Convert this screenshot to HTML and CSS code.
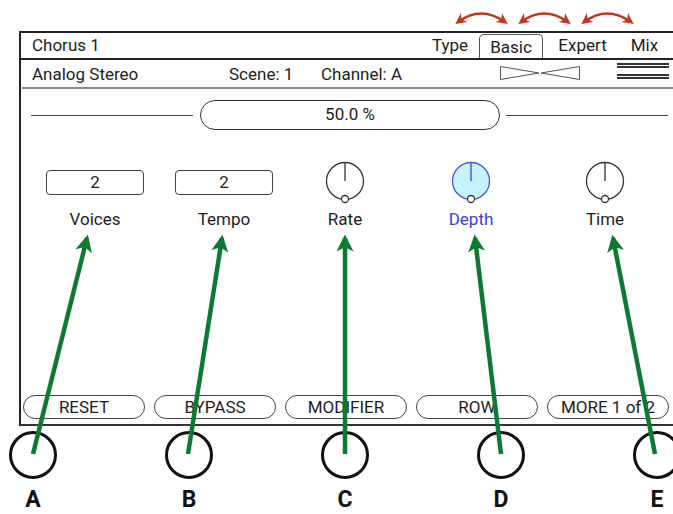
FILE: index.html
```html
<!DOCTYPE html>
<html lang="en">
<head>
    <meta charset="UTF-8">
    <meta name="viewport" content="width=device-width, initial-scale=1.0">
    <title>Chorus 1 - Basic</title>
    <link rel="stylesheet" href="styles.css">
</head>
<body>
    <div class="stage">
        <div class="unit">
            <div class="title-bar">
                <span class="block-name">Chorus 1</span>
                <div class="tabs">
                    <span class="tab type">Type</span>
                    <span class="tab active">Basic</span>
                    <span class="tab expert">Expert</span>
                    <span class="tab mix">Mix</span>
                </div>
            </div>
            <div class="info-bar">
                <span class="model">Analog Stereo</span>
                <span class="scene">Scene: 1</span>
                <span class="channel">Channel: A</span>
                <svg class="bowtie" width="80" height="14" viewBox="0 0 80 14">
                    <polygon points="0.5,0.5 39,7 0.5,13.5" fill="none" stroke="#555" stroke-width="1"/>
                    <polygon points="79.5,0.5 41,7 79.5,13.5" fill="none" stroke="#555" stroke-width="1"/>
                </svg>
                <svg class="menu" width="52" height="17" viewBox="0 0 52 17">
                    <rect x="0" y="0" width="52" height="2" fill="#333"/>
                    <rect x="0" y="3" width="52" height="2" fill="#333"/>
                    <rect x="0" y="11" width="52" height="2" fill="#333"/>
                    <rect x="0" y="14" width="52" height="2" fill="#333"/>
                </svg>
            </div>
            <div class="slider-row">
                <span class="rule left"></span>
                <div class="pill">50.0 %</div>
                <span class="rule right"></span>
            </div>
            <div class="params">
                <div class="param p1">
                    <div class="control"><div class="value-box">2</div></div>
                    <div class="label">Voices</div>
                </div>
                <div class="param p2">
                    <div class="control"><div class="value-box">2</div></div>
                    <div class="label">Tempo</div>
                </div>
                <div class="param p3">
                    <div class="control">
                        <svg class="knob" width="44" height="44" viewBox="0 0 44 44">
                            <circle cx="22" cy="21" r="18.5" fill="#fff" stroke="#333" stroke-width="1.3"/>
                            <line x1="22" y1="2.5" x2="22" y2="21" stroke="#333" stroke-width="1.3"/>
                            <circle cx="22" cy="39" r="3.5" fill="#fff" stroke="#333" stroke-width="1.3"/>
                        </svg>
                    </div>
                    <div class="label">Rate</div>
                </div>
                <div class="param p4 selected">
                    <div class="control">
                        <svg class="knob" width="44" height="44" viewBox="0 0 44 44">
                            <circle cx="22" cy="21" r="18.5" fill="#c6f4fb" stroke="#4653e6" stroke-width="1.3"/>
                            <line x1="22" y1="2.5" x2="22" y2="21" stroke="#3a47c8" stroke-width="1.3"/>
                            <circle cx="22" cy="39" r="3.5" fill="#fff" stroke="#333" stroke-width="1.3"/>
                        </svg>
                    </div>
                    <div class="label">Depth</div>
                </div>
                <div class="param p5">
                    <div class="control">
                        <svg class="knob" width="44" height="44" viewBox="0 0 44 44">
                            <circle cx="22" cy="21" r="18.5" fill="#fff" stroke="#333" stroke-width="1.3"/>
                            <line x1="22" y1="2.5" x2="22" y2="21" stroke="#333" stroke-width="1.3"/>
                            <circle cx="22" cy="39" r="3.5" fill="#fff" stroke="#333" stroke-width="1.3"/>
                        </svg>
                    </div>
                    <div class="label">Time</div>
                </div>
            </div>
            <div class="softkeys">
                <div class="softkey">RESET</div>
                <div class="softkey">BYPASS</div>
                <div class="softkey">MODIFIER</div>
                <div class="softkey">ROW</div>
                <div class="softkey">MORE 1 of 2</div>
            </div>
        </div>

        <div class="footswitches">
            <div class="switch"><div class="ring"></div><div class="letter">A</div></div>
            <div class="switch"><div class="ring"></div><div class="letter">B</div></div>
            <div class="switch"><div class="ring"></div><div class="letter">C</div></div>
            <div class="switch"><div class="ring"></div><div class="letter">D</div></div>
            <div class="switch"><div class="ring"></div><div class="letter">E</div></div>
        </div>

        <!-- annotation arrows drawn over the screen -->
        <svg class="overlay" width="673" height="514" viewBox="0 0 673 514">
            <defs>
                <marker id="red-head" viewBox="0 0 10 10" refX="7" refY="5" markerWidth="11" markerHeight="11" markerUnits="userSpaceOnUse" orient="auto-start-reverse">
                    <path d="M0,0 L10,5 L0,10 L3,5 Z" fill="#c5341c"/>
                </marker>
                <marker id="green-head" viewBox="0 0 10 10" refX="8" refY="5" markerWidth="20" markerHeight="17" markerUnits="userSpaceOnUse" orient="auto">
                    <path d="M0,0 L10,5 L0,10 L2.5,5 Z" fill="#0d7a32"/>
                </marker>
            </defs>
            <g fill="none" stroke="#c5341c" stroke-width="2.6">
                <path d="M458,22 Q481,5 505,22" marker-start="url(#red-head)" marker-end="url(#red-head)"/>
                <path d="M521,22 Q544,5 568,22" marker-start="url(#red-head)" marker-end="url(#red-head)"/>
                <path d="M584,22 Q607,5 631,22" marker-start="url(#red-head)" marker-end="url(#red-head)"/>
            </g>
            <g stroke="#0d7a32" stroke-width="4.5" stroke-linecap="butt">
                <line x1="33" y1="454" x2="87" y2="238" marker-end="url(#green-head)"/>
                <line x1="188" y1="454" x2="222" y2="238" marker-end="url(#green-head)"/>
                <line x1="345" y1="454" x2="345" y2="238" marker-end="url(#green-head)"/>
                <line x1="501" y1="454" x2="475" y2="238" marker-end="url(#green-head)"/>
                <line x1="655" y1="454" x2="613" y2="238" marker-end="url(#green-head)"/>
            </g>
        </svg>
    </div>
</body>
</html>
```

FILE: styles.css
```css
body {
    margin: 0;
    background-color: #fff;
    font-family: Roboto, "Liberation Sans", sans-serif;
    color: #1e1e1e;
    overflow: hidden;
}

.stage {
    position: relative;
    width: 673px;
    height: 514px;
    padding-top: 31px;
    box-sizing: border-box;
}

.unit {
    margin-left: 19px;
    height: 395px;
    box-sizing: border-box;
    border-top: 2px solid #222;
    border-left: 2px solid #222;
    border-bottom: 2px solid #333;
    display: flex;
    flex-direction: column;
}

.title-bar {
    height: 25px;
    border-bottom: 2px solid #222;
    display: flex;
    align-items: flex-end;
    font-size: 17px;
    line-height: 25px;
}

.block-name {
    margin-left: 11px;
}

.tabs {
    margin-left: auto;
    display: flex;
    align-items: flex-end;
}

.tab {
    height: 25px;
    text-align: center;
}

.tab.type {
    width: 46px;
    margin-right: 6px;
}

.tab.active {
    width: 64px;
    box-sizing: border-box;
    border: 1px solid #555;
    border-bottom: none;
    border-radius: 5px 5px 0 0;
    height: 24px;
    line-height: 24px;
    margin-right: 6px;
}

.tab.expert {
    width: 67px;
}

.tab.mix {
    width: 57px;
}

.info-bar {
    height: 26px;
    padding-top: 1px;
    margin-left: 1px;
    border-bottom: 2px solid #8a8a8a;
    display: flex;
    align-items: center;
    font-size: 17px;
    line-height: 26px;
}

.model {
    margin-left: 10px;
    width: 197px;
}

.scene {
    width: 92px;
}

.channel {
    width: 179px;
}

.bowtie {
    margin-top: -2px;
}

.menu {
    margin-left: 37px;
    margin-top: -6px;
}

.slider-row {
    margin-top: 11px;
    height: 30px;
    display: flex;
    align-items: center;
}

.rule {
    height: 1px;
    background-color: #444;
}

.rule.left {
    margin-left: 10px;
    width: 162px;
}

.rule.right {
    width: 162px;
}

.pill {
    width: 300px;
    height: 30px;
    margin: 0 6px 0 7px;
    box-sizing: border-box;
    border: 1.5px solid #333;
    border-radius: 15px;
    text-align: center;
    font-size: 17px;
    line-height: 27px;
}

.params {
    margin-top: 32px;
    padding-left: 9px;
    display: flex;
}

.param {
    display: flex;
    flex-direction: column;
    align-items: center;
}

.p1 { width: 130px; }
.p2 { width: 128px; }
.p3 { width: 114px; }
.p4 { width: 138px; }
.p5 { width: 130px; }

.control {
    height: 40px;
    display: flex;
    align-items: center;
    justify-content: center;
}

.value-box {
    width: 98px;
    height: 25px;
    box-sizing: border-box;
    border: 1.5px solid #444;
    border-radius: 4px;
    text-align: center;
    font-size: 17px;
    line-height: 22px;
}

.knob {
    display: block;
}

.label {
    margin-top: 7px;
    font-size: 17px;
    line-height: 20px;
}

.selected .label {
    color: #3a3fdc;
}

.softkeys {
    margin-top: auto;
    margin-bottom: 5px;
    padding-left: 2px;
    display: grid;
    grid-template-columns: repeat(5, 122px);
    column-gap: 9px;
}

.softkey {
    height: 24px;
    box-sizing: border-box;
    border: 1.5px solid #444;
    border-radius: 12px;
    text-align: center;
    font-size: 17px;
    line-height: 22px;
}

.footswitches {
    margin-top: 5px;
    padding-left: 9px;
    display: flex;
    gap: 108px;
}

.switch {
    width: 48px;
    display: flex;
    flex-direction: column;
    align-items: center;
}

.ring {
    width: 48px;
    height: 48px;
    box-sizing: border-box;
    border: 3px solid #111;
    border-radius: 50%;
}

.letter {
    margin-top: 12px;
    font-size: 23px;
    font-weight: bold;
    line-height: 18px;
    color: #111;
}

.overlay {
    position: absolute;
    top: 0;
    left: 0;
    pointer-events: none;
}
```
